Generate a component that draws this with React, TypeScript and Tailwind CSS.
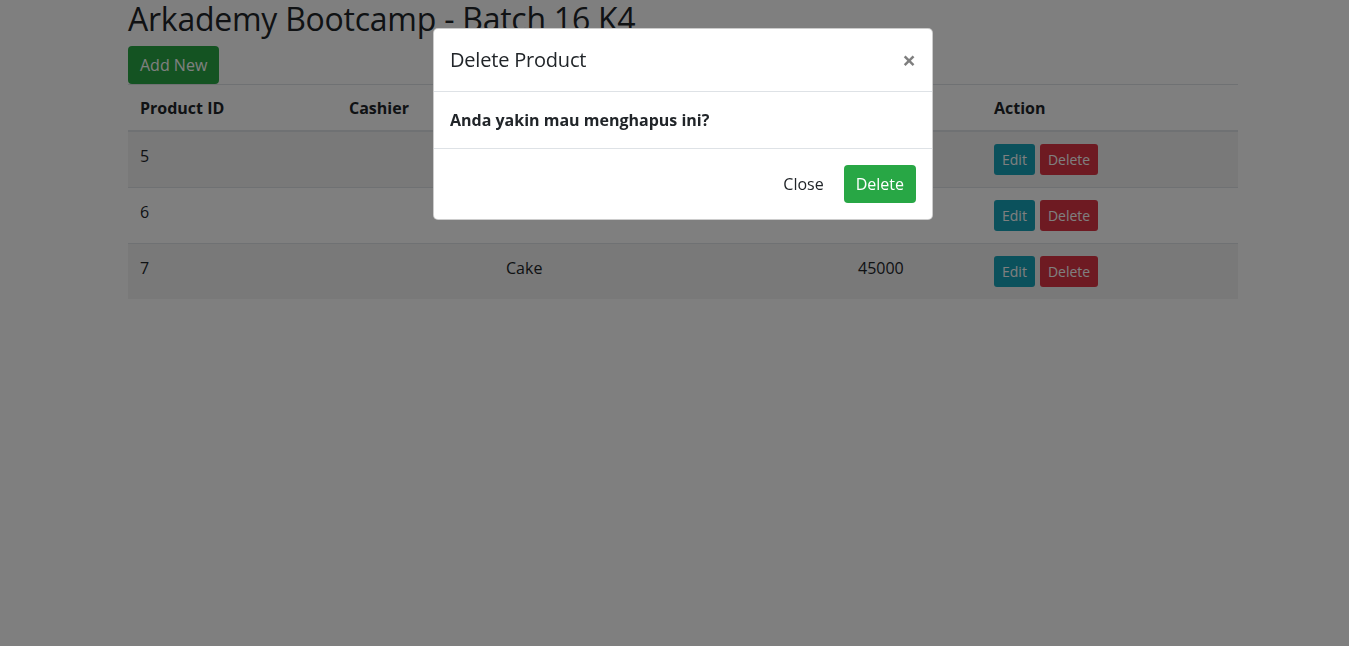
import React from "react";

export default function App() {
    const products = [
        { id: 5, cashier: "", product: "", price: "" },
        { id: 6, cashier: "", product: "", price: "" },
        { id: 7, cashier: "", product: "Cake", price: "45000" },
    ];

    return (
        <div className="relative min-h-screen bg-white text-[#212529] font-['Open_Sans','Noto_Sans',sans-serif] text-base">
            {/* Page */}
            <div className="pl-[17px]">
                <div className="mx-auto w-[1110px]">
                    <h2 className="mb-2 text-[32px] leading-[1.2] font-medium tracking-[-0.25px]">Arkademy Bootcamp - Batch 16 K4</h2>
                    <button className="h-[38px] rounded bg-[#28a745] px-3 text-white leading-6">Add New</button>

                    {/* Table */}
                    <div className="border-t border-[#dee2e6]">
                        <div className="grid h-[47px] grid-cols-[209px_157px_352px_136px_256px] items-center border-b-2 border-[#dee2e6] font-bold">
                            <div className="px-3">Product ID</div>
                            <div className="px-3">Cashier</div>
                            <div className="px-3">Product</div>
                            <div className="px-3">Price</div>
                            <div className="px-3">Action</div>
                        </div>
                        {products.map((p, i) => (
                            <div
                                key={p.id}
                                className={`grid grid-cols-[209px_157px_352px_136px_256px] ${i > 0 ? "border-t border-[#dee2e6]" : ""} ${i % 2 === 0 ? "bg-black/5" : ""}`}
                            >
                                <div className="p-3 leading-6">{p.id}</div>
                                <div className="p-3 leading-6">{p.cashier}</div>
                                <div className="p-3 leading-6">{p.product}</div>
                                <div className="p-3 leading-6">{p.price}</div>
                                <div className="flex gap-[5px] p-3">
                                    <button className="h-[31px] rounded-[3px] bg-[#17a2b8] px-2 text-sm text-white">Edit</button>
                                    <button className="h-[31px] rounded-[3px] bg-[#dc3545] px-2 text-sm text-white">Delete</button>
                                </div>
                            </div>
                        ))}
                    </div>
                </div>
            </div>

            {/* Backdrop */}
            <div className="fixed inset-0 bg-black/50"></div>

            {/* Modal */}
            <div className="fixed inset-0 flex justify-center pl-[17px]">
                <div className="mt-[28px] h-fit w-[500px] rounded-[5px] border border-black/20 bg-white">
                    <div className="flex items-start justify-between border-b border-[#dee2e6] p-4">
                        <h5 className="text-xl leading-[30px] font-medium tracking-[-0.2px]">Delete Product</h5>
                        <button className="pt-[3px] text-2xl leading-none font-bold text-black opacity-50">×</button>
                    </div>
                    <div className="p-4">
                        <p className="font-bold leading-6">Anda yakin mau menghapus ini?</p>
                    </div>
                    <div className="flex items-center justify-end gap-1 border-t border-[#dee2e6] p-3">
                        <button className="m-1 mr-0 h-[38px] px-3 leading-6">Close</button>
                        <button className="m-1 h-[38px] rounded bg-[#28a745] px-3 leading-6 text-white">Delete</button>
                    </div>
                </div>
            </div>
        </div>
    );
}
